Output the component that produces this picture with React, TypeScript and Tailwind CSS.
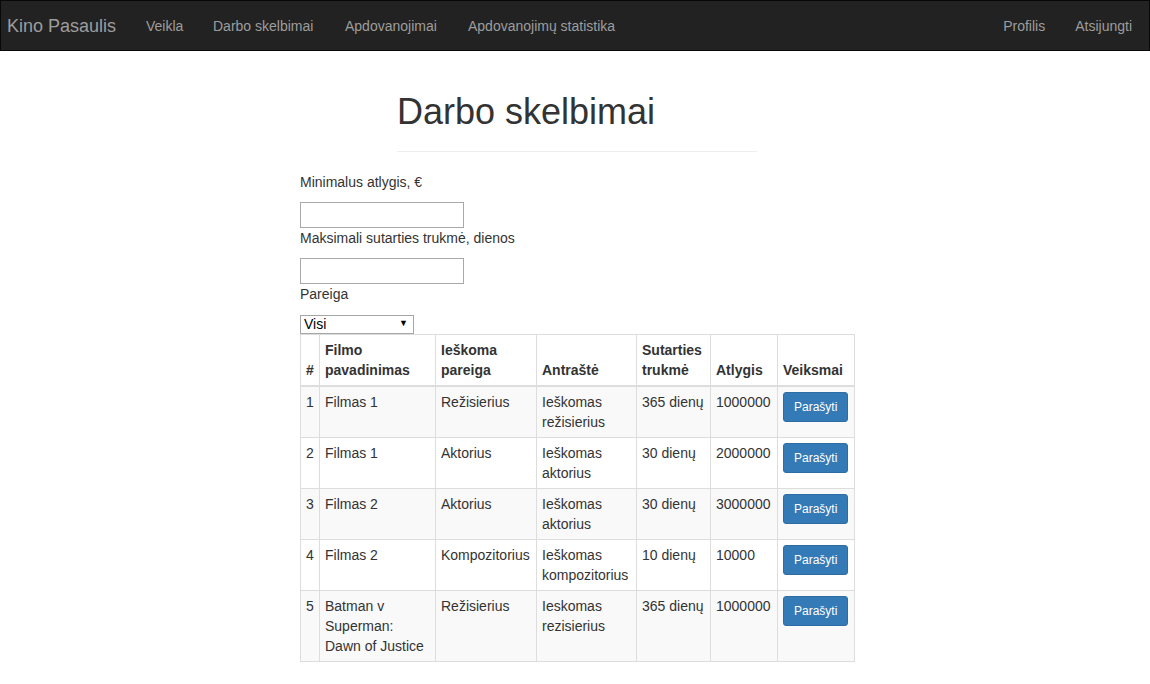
const navLinks = [
  { label: "Veikla", w: "w-[67px]" },
  { label: "Darbo skelbimai", w: "w-[132px]" },
  { label: "Apdovanojimai", w: "w-[123px]" },
  { label: "Apdovanojimų statistika", w: "" },
]

const jobs = [
  { id: 1, film: "Filmas 1", role: "Režisierius", title: "Ieškomas režisierius", term: "365 dienų", pay: "1000000" },
  { id: 2, film: "Filmas 1", role: "Aktorius", title: "Ieškomas aktorius", term: "30 dienų", pay: "2000000" },
  { id: 3, film: "Filmas 2", role: "Aktorius", title: "Ieškomas aktorius", term: "30 dienų", pay: "3000000" },
  { id: 4, film: "Filmas 2", role: "Kompozitorius", title: "Ieškomas kompozitorius", term: "10 dienų", pay: "10000" },
  { id: 5, film: "Batman v Superman: Dawn of Justice", role: "Režisierius", title: "Ieskomas rezisierius", term: "365 dienų", pay: "1000000" },
]

function Navbar() {
  return (
    <nav className="flex h-[51px] justify-between border border-[#080808] bg-[#222] text-[#9d9d9d]">
      <div className="flex">
        <a className="w-[130px] shrink-0 pl-[6px] pt-[15px] text-[18px] leading-[20px]">Kino Pasaulis</a>
        {navLinks.map((l) => (
          <a key={l.label} className={`shrink-0 whitespace-nowrap px-[15px] pt-[15px] leading-[20px] ${l.w}`}>
            {l.label}
          </a>
        ))}
      </div>
      <div className="flex pr-[2px]">
        <a className="px-[15px] pt-[15px] leading-[20px]">Profilis</a>
        <a className="px-[15px] pt-[15px] leading-[20px]">Atsijungti</a>
      </div>
    </nav>
  )
}

export default function App() {
  return (
    <div className="min-h-screen bg-white text-[14px] leading-[20px] text-[#333] [font-family:'Liberation_Sans',Arial,sans-serif]">
      <Navbar />

      <div className="ml-[397px] mt-[41px] w-[360px] border-b border-[#eee] pb-[9px]">
        <h1 className="mb-[10px] text-[36px] leading-[1.1] font-normal">Darbo skelbimai</h1>
      </div>

      <div className="ml-[300px] mt-[20px] w-[555px]">
        <label className="mb-[10px] block">Minimalus atlygis, €</label>
        <input type="text" className="block h-[26px] w-[164px] border border-[#a9a9a9] px-1 outline-none" />
        <label className="mb-[10px] block">Maksimali sutarties trukmė, dienos</label>
        <input type="text" className="block h-[26px] w-[164px] border border-[#a9a9a9] px-1 outline-none" />
        <label className="mb-[10px] block">Pareiga</label>
        <div className="relative h-[20px] w-[114px]">
          <select className="h-[19px] w-full appearance-none border border-[#a6a6a6] bg-white pl-[3px] text-[14px] leading-[17px] text-black outline-none">
            <option>Visi</option>
          </select>
          <span className="pointer-events-none absolute right-[6px] top-[4px] text-[9px] leading-[10px] text-black">▼</span>
        </div>

        <table className="w-[554px] table-fixed border-collapse border border-[#ddd]">
          <colgroup>
            <col className="w-[19px]" />
            <col className="w-[116px]" />
            <col className="w-[101px]" />
            <col className="w-[100px]" />
            <col className="w-[74px]" />
            <col className="w-[67px]" />
            <col className="w-[77px]" />
          </colgroup>
          <thead>
            <tr>
              {["#", "Filmo pavadinimas", "Ieškoma pareiga", "Antraštė", "Sutarties trukmė", "Atlygis", "Veiksmai"].map((h) => (
                <th key={h} className="border border-b-2 border-[#ddd] p-[5px] text-left align-bottom font-bold">
                  {h}
                </th>
              ))}
            </tr>
          </thead>
          <tbody>
            {jobs.map((j, i) => (
              <tr key={j.id} className={i % 2 === 0 ? "bg-[#f9f9f9]" : "bg-white"}>
                <td className="border border-[#ddd] p-[5px] align-top">{j.id}</td>
                <td className="border border-[#ddd] p-[5px] align-top">{j.film}</td>
                <td className="border border-[#ddd] p-[5px] align-top">{j.role}</td>
                <td className="border border-[#ddd] p-[5px] align-top">{j.title}</td>
                <td className="border border-[#ddd] p-[5px] align-top">{j.term}</td>
                <td className="border border-[#ddd] p-[5px] align-top">{j.pay}</td>
                <td className="border border-[#ddd] p-[5px] align-top">
                  <button className="h-[30px] rounded-[3px] border border-[#2e6da4] bg-[#337ab7] px-[10px] text-[12px] leading-[18px] text-white">
                    Parašyti
                  </button>
                </td>
              </tr>
            ))}
          </tbody>
        </table>
      </div>
    </div>
  )
}
